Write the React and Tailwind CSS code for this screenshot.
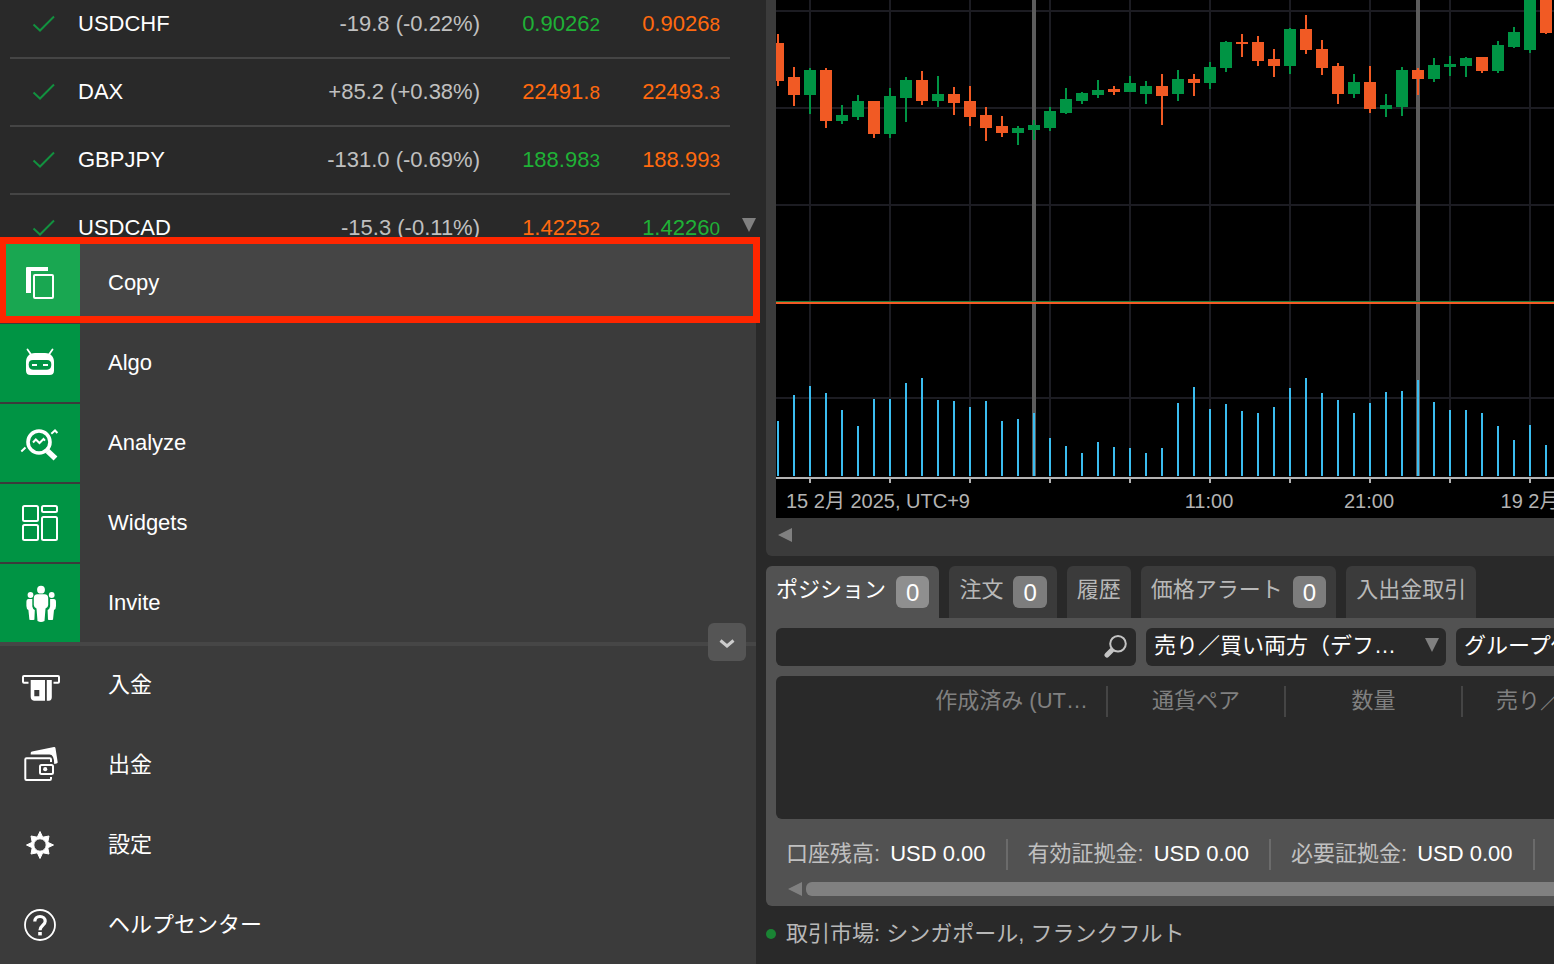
import React, { useState } from 'react';
import clsx from 'clsx';

// --- Data ---

const quotes = [
  { symbol: 'USDCHF', change: '-19.8 (-0.22%)', bid: '0.90262', bidUp: true, ask: '0.90268', askUp: false },
  { symbol: 'DAX', change: '+85.2 (+0.38%)', bid: '22491.8', bidUp: false, ask: '22493.3', askUp: false },
  { symbol: 'GBPJPY', change: '-131.0 (-0.69%)', bid: '188.983', bidUp: true, ask: '188.993', askUp: false },
  { symbol: 'USDCAD', change: '-15.3 (-0.11%)', bid: '1.42252', bidUp: false, ask: '1.42260', askUp: true },
];

// direction, high, body top, body bottom, low
const candles = [
  ['d', 34, 43, 81, 86], ['d', 67, 77, 95, 106], ['u', 68, 70, 95, 114], ['d', 68, 70, 121, 128],
  ['u', 105, 115, 121, 124], ['u', 95, 101, 117, 120], ['d', 101, 101, 134, 138], ['u', 88, 96, 134, 138],
  ['u', 77, 80, 98, 122], ['d', 71, 80, 101, 105], ['u', 76, 94, 101, 107], ['d', 87, 94, 103, 115],
  ['d', 86, 101, 117, 126], ['d', 107, 115, 128, 141], ['d', 116, 126, 133, 137], ['u', 126, 128, 133, 145],
  ['u', 120, 125, 130, 140], ['u', 107, 111, 128, 131], ['u', 88, 99, 113, 114], ['u', 92, 93, 101, 104],
  ['u', 80, 90, 95, 98], ['d', 86, 89, 92, 95], ['u', 76, 83, 92, 92], ['u', 81, 86, 94, 104],
  ['d', 74, 86, 96, 125], ['u', 70, 79, 94, 101], ['d', 74, 79, 83, 96], ['u', 62, 67, 83, 89],
  ['u', 41, 42, 68, 72], ['d', 34, 42, 44, 57], ['d', 36, 42, 61, 66], ['d', 49, 59, 66, 77],
  ['u', 28, 29, 66, 74], ['d', 15, 29, 50, 54], ['d', 40, 49, 68, 75], ['d', 63, 66, 94, 104],
  ['u', 74, 82, 94, 98], ['d', 66, 82, 109, 113], ['u', 94, 105, 109, 117], ['u', 67, 70, 107, 116],
  ['d', 68, 70, 79, 95], ['u', 58, 65, 79, 82], ['u', 56, 64, 67, 76], ['u', 57, 58, 66, 77],
  ['d', 57, 57, 71, 73], ['u', 41, 45, 71, 73], ['u', 27, 32, 47, 48], ['u', 0, 0, 50, 53],
  ['d', 0, 0, 33, 34],
];

const volumeTops = [
  421, 395, 386, 393, 410, 426, 399, 399, 383, 378, 400, 401, 407, 401, 421, 419, 413,
  438, 446, 453, 442, 447, 448, 453, 448, 403, 387, 409, 404, 411, 413, 407, 388, 378,
  393, 400, 413, 403, 392, 391, 380, 402, 410, 410, 413, 426, 440, 425, 445,
];

const gridX = [34, 114, 194, 274, 354, 434, 514, 594, 674, 754];
const gridY = [11, 108, 205, 302, 398];
const sessionX = [258, 642];

const tabs = [
  { id: 'positions', label: 'ポジション', count: 0 },
  { id: 'orders', label: '注文', count: 0 },
  { id: 'history', label: '履歴' },
  { id: 'alerts', label: '価格アラート', count: 0 },
  { id: 'transactions', label: '入出金取引' },
];

const balances = ['口座残高:', '有効証拠金:', '必要証拠金:'];

// --- Icons ---

const Icon = ({ children }) => (
  <svg className="w-10 h-10 overflow-visible" viewBox="0 0 40 40" fill="none" stroke="none" aria-hidden="true">
    {children}
  </svg>
);

const CopyIcon = () => (
  <Icon>
    <path d="M7 4h21v4H11v22H6V5q0-1 1-1z" fill="#fff" />
    <rect x="14" y="12" width="19" height="23" rx="1" stroke="#fff" strokeWidth="2" />
  </Icon>
);

const AlgoIcon = () => (
  <Icon>
    <path d="M7.5 6.5l3.5 5M32.5 6.5l-3.5 5" stroke="#fff" strokeWidth="1.8" strokeLinecap="round" />
    <path
      d="M15 10h10c6 0 9 4 9 9v8.500c0 3-1.500 4.500-4.500 4.500h-19C7.500 32 6 30.500 6 27.500V19c0-5 3-9 9-9z"
      fill="#fff"
    />
    <path d="M13 17h14c3 0 4.300 1.500 4.300 4.500S30 26.700 27 26.700H13c-3 0-4.300-2-4.300-5.200S10 17 13 17z" fill="#009444" />
    <path d="M12 22h5M23 22h5" stroke="#fff" strokeWidth="2" />
  </Icon>
);

const AnalyzeIcon = () => (
  <Icon>
    <g stroke="#fff">
      <circle cx="19" cy="19" r="11" strokeWidth="3.600" />
      <path d="M27.500 28l8 7.500" strokeWidth="5.500" />
      <path d="M13 19.500l2.800-3 3.700 3.500 4-4 1.500 1.700M1.300 28.500l4.200-4M31.300 10.700L35 7.500l2.400 2.500" strokeWidth="2" />
    </g>
  </Icon>
);

const WidgetsIcon = () => (
  <Icon>
    <g stroke="#fff" strokeWidth="2">
      <rect x="3" y="3" width="15" height="15" rx="1.500" />
      <rect x="22" y="3" width="15" height="6" rx="1.500" />
      <rect x="22" y="14" width="15" height="23" rx="1.500" />
      <rect x="3" y="22" width="15" height="15" rx="1.500" />
    </g>
  </Icon>
);

const InviteIcon = () => (
  <Icon>
    <g fill="#fff">
      <circle cx="21" cy="6.700" r="3.900" />
      <circle cx="10.500" cy="12" r="2.900" />
      <circle cx="31.700" cy="12" r="2.900" />
      <path d="M17.500 11.200h7q3.700 0 3.700 4v6.800q0 2-2.700 3.500l-1 12.500q-3.500 2.200-7 0l-1-12.500q-2.700-1.500-2.700-3.500v-6.800q0-4 3.700-4z" />
      <path d="M8.500 16h3.800v7.500q.4 2.500 2.500 3.500l-.4 9.700q-2.500.6-5 0l-1-9.700q-2-1-2-4v-4q0-3 2.100-3z" />
      <path d="M33.900 16h-3.800v7.500q-.4 2.500-2.500 3.500l.4 9.700q2.500.6 5 0l1-9.700q2-1 2-4v-4q0-3-2.100-3z" />
    </g>
  </Icon>
);

const DepositIcon = () => (
  <Icon>
    <path d="M8.500 17.700H4q-1 0-1-1V12q0-1 1-1h34q1 0 1 1v4.700q0 1-1 1h-4.500" stroke="#fff" strokeWidth="2" />
    <path d="M10.700 15H25v20.700H14q-3.300-.5-3.300-4zM14.300 25v6.300h5V25z" fill="#fff" fillRule="evenodd" />
    <path d="M26.800 15h5v17q0 3.500-3 3.700h-2z" fill="#fff" />
  </Icon>
);

const WithdrawIcon = () => (
  <Icon>
    <path d="M31 17v-2.500q0-1.200-1.200-1.200H6.500q-1.200 0-1.200 1.200v19.300q0 1.200 1.200 1.200h23.300q1.200 0 1.200-1.200V32" stroke="#fff" strokeWidth="2" />
    <rect x="20" y="20" width="13" height="9" rx="1.500" stroke="#fff" strokeWidth="2" />
    <circle cx="25.200" cy="24.200" r="2.100" fill="#fff" />
    <path d="M12 6.500L34 2q1.300-.2 1.500 1.200l2.200 14q0 1-1.200 1.300l-2.300.5q0-9.500-4.700-9.500H10.700V8q0-1.200 1.300-1.500z" fill="#fff" />
  </Icon>
);

const SettingsIcon = () => (
  <Icon>
    <path
      d="M20 6.500l2.700 5.700 6.300-1.200-1.200 6.300L33.500 20l-5.700 2.700 1.200 6.300-6.300-1.200L20 33.500l-2.700-5.700-6.300 1.200 1.200-6.300L6.500 20l5.700-2.700-1.200-6.300 6.300 1.200zM20 13.800a6.200 6.200 0 1 0 0 12.400 6.200 6.200 0 0 0 0-12.400z"
      fill="#fff"
      fillRule="evenodd"
      stroke="#fff"
      strokeWidth="1"
      strokeLinejoin="round"
    />
  </Icon>
);

const HelpIcon = () => (
  <Icon>
    <circle cx="20" cy="20" r="15" stroke="#fff" strokeWidth="1.800" />
    <path d="M14.800 16.500c0-3 2-5 5.200-5s5.200 2 5.200 4.800c0 4-5.200 4-5.200 9" stroke="#fff" strokeWidth="3.200" />
    <rect x="18.200" y="27" width="3.600" height="3.400" fill="#fff" />
  </Icon>
);

const CheckIcon = () => (
  <svg className="w-6 h-5" viewBox="0 0 24 20" fill="none" aria-hidden="true">
    <path d="M1.500 10.500l6.500 6L22 2.500" stroke="#12913f" strokeWidth="2" />
  </svg>
);

const DownArrow = () => (
  <svg className="w-[14px] h-[14px]" viewBox="0 0 14 14" aria-hidden="true">
    <path d="M0 0h14L7 14z" fill="#808080" />
  </svg>
);

const LeftArrow = () => (
  <svg className="w-[14px] h-[14px]" viewBox="0 0 14 14" aria-hidden="true">
    <path d="M14 0v14L0 7z" fill="#808080" />
  </svg>
);

const apps = [
  { id: 'copy', label: 'Copy', icon: CopyIcon },
  { id: 'algo', label: 'Algo', icon: AlgoIcon },
  { id: 'analyze', label: 'Analyze', icon: AnalyzeIcon },
  { id: 'widgets', label: 'Widgets', icon: WidgetsIcon },
  { id: 'invite', label: 'Invite', icon: InviteIcon },
];

const links = [
  { id: 'deposit', label: '入金', icon: DepositIcon },
  { id: 'withdraw', label: '出金', icon: WithdrawIcon },
  { id: 'settings', label: '設定', icon: SettingsIcon },
  { id: 'help', label: 'ヘルプセンター', icon: HelpIcon },
];

// --- Left column ---

const Price = ({ value, up }) => (
  <td className={clsx('border-b-2 border-[#454545] pr-[10px] text-right', up ? 'text-[#1fb136]' : 'text-[#ff690f]')}>
    {value.slice(0, -1)}
    <span className="text-[19px]">{value.slice(-1)}</span>
  </td>
);

const Watchlist = () => (
  <div className="flex h-[244px] overflow-hidden">
    <div className="flex-1 pl-[10px]">
      <table className="-mt-[9px] w-full table-fixed border-separate border-spacing-0">
        <colgroup>
          <col className="w-[68px]" />
          <col />
          <col className="w-[200px]" />
          <col className="w-[120px]" />
          <col className="w-[120px]" />
        </colgroup>
        <tbody>
          {quotes.map((q) => (
            <tr key={q.symbol} className="h-[68px]">
              <td className="border-b-2 border-[#454545] pl-[22px]"><CheckIcon /></td>
              <td className="border-b-2 border-[#454545] text-white">{q.symbol}</td>
              <td className="border-b-2 border-[#454545] pr-[10px] text-right text-[#c0c0c0]">{q.change}</td>
              <Price value={q.bid} up={q.bidUp} />
              <Price value={q.ask} up={q.askUp} />
            </tr>
          ))}
        </tbody>
      </table>
    </div>
    <div className="flex w-[26px] items-end pb-3 pl-3">
      <DownArrow />
    </div>
  </div>
);

const AppMenu = ({ selected, onSelect }) => (
  <nav className="flex flex-col gap-[2px]">
    {apps.map(({ id, label, icon: AppIcon }) => (
      <button
        key={id}
        onClick={() => onSelect(id)}
        className={clsx('relative flex h-[78px] items-center text-left text-white', selected === id && 'bg-[#454545]')}
      >
        <span className={clsx('flex h-full w-20 items-center justify-center', selected === id ? 'bg-[#19a751]' : 'bg-[#009444]')}>
          <AppIcon />
        </span>
        <span className="pl-7">{label}</span>
        {selected === id && (
          <span className="absolute -top-[7px] -right-1 -bottom-[1px] -left-[1px] z-10 border-[7px] border-[#ff2600]" />
        )}
      </button>
    ))}
  </nav>
);

const LinkMenu = () => (
  <nav className="relative flex flex-1 flex-col gap-[2px] border-t-4 border-[#464646]">
    {links.map(({ id, label, icon: LinkIcon }) => (
      <a key={id} href={`#${id}`} className="flex h-[78px] shrink-0 items-center text-white">
        <span className="flex w-20 justify-center"><LinkIcon /></span>
        <span className="pl-7">{label}</span>
      </a>
    ))}
    <button
      aria-label="Collapse"
      className="absolute -top-[23px] right-[10px] flex h-[38px] w-[38px] items-center justify-center rounded-md bg-[#555555]"
    >
      <svg className="w-4 h-4" viewBox="0 0 16 16" fill="none" aria-hidden="true">
        <path d="M1.500 6.500L8 12l6.500-5.500" stroke="#ccc" strokeWidth="3" />
      </svg>
    </button>
  </nav>
);

// --- Right column ---

const Chart = () => (
  <svg className="block h-[518px] w-full bg-black" role="img" aria-label="Price chart">
    <g fill="#1c1c22">
      {gridX.map((x) => <rect key={x} x={x - 1} y="0" width="2" height="477" />)}
      {gridY.map((y) => <rect key={y} x="0" y={y - 1} width="100%" height="2" />)}
    </g>
    {sessionX.map((x) => <rect key={x} x={x - 2} y="0" width="4" height="476" fill="#5c5c5c" />)}
    {candles.map(([dir, high, top, bottom, low], i) => (
      <g key={i} fill={dir === 'u' ? '#009444' : '#f15a24'}>
        <rect x={i * 16 + 1} y={high} width="2" height={low - high} />
        <rect x={i * 16 - 4} y={top} width="12" height={bottom - top} />
      </g>
    ))}
    <rect x="0" y="301" width="100%" height="1" fill="#1a7a3c" />
    <rect x="0" y="302" width="100%" height="2" fill="#f15a24" />
    {volumeTops.map((top, i) => (
      <rect key={i} x={i * 16 + 1} y={top} width="2" height={476 - top} fill="#3bbdf0" />
    ))}
    <g fill="#b3b3b3">
      <rect x="0" y="477" width="100%" height="2" />
      {gridX.map((x) => <rect key={x} x={x - 1} y="479" width="2" height="4" />)}
    </g>
    <g fill="#b3b3b3" fontSize="20">
      <text x="10" y="508">15 2月 2025, UTC+9</text>
      <text x="433" y="508" textAnchor="middle">11:00</text>
      <text x="593" y="508" textAnchor="middle">21:00</text>
      <text x="754" y="508" textAnchor="middle">19 2月</text>
    </g>
  </svg>
);

const Tabs = ({ active, onChange }) => (
  <div role="tablist" className="flex gap-[10px]">
    {tabs.map((tab) => (
      <button
        key={tab.id}
        role="tab"
        aria-selected={active === tab.id}
        onClick={() => onChange(tab.id)}
        className={clsx(
          'flex h-[52px] shrink-0 items-start gap-[10px] rounded-t-md px-[10px] pt-[10px] whitespace-nowrap',
          active === tab.id ? 'bg-[#525252] text-white' : 'bg-[#3b3b3b] text-[#b8b8b8]'
        )}
      >
        <span className="leading-7">{tab.label}</span>
        {tab.count !== undefined && (
          <span
            className={clsx(
              'h-8 rounded-md px-[10px] text-2xl leading-[34px] text-white',
              active === tab.id ? 'bg-[#8f8f8f]' : 'bg-[#7d7d7d]'
            )}
          >
            {tab.count}
          </span>
        )}
      </button>
    ))}
  </div>
);

const Dropdown = ({ label, value }) => (
  <div className="relative w-[300px] shrink-0">
    <select
      aria-label={label}
      className="h-[38px] w-full appearance-none rounded-md bg-[#292929] pr-10 pb-[2px] pl-2 text-white"
    >
      <option>{value}</option>
    </select>
    <span className="pointer-events-none absolute top-[10px] right-[7px]"><DownArrow /></span>
  </div>
);

const Filters = () => (
  <div className="flex gap-[10px]">
    <div className="relative w-[360px] shrink-0">
      <input
        type="text"
        aria-label="検索"
        className="h-[38px] w-full rounded-md bg-[#292929] pr-10 pl-2 text-white outline-none"
      />
      <svg className="absolute top-[6px] right-[9px] h-6 w-6" viewBox="0 0 24 24" fill="none" aria-hidden="true">
        <circle cx="15" cy="9.700" r="7.800" stroke="#c4c4c4" strokeWidth="2" />
        <path d="M8.500 16.500L4 21" stroke="#c4c4c4" strokeWidth="5" strokeLinecap="round" />
      </svg>
    </div>
    <Dropdown label="売買区分" value="売り／買い両方（デフ…" />
    <Dropdown label="グループ" value="グループ化なし" />
  </div>
);

const HeadCell = ({ children, className }) => (
  <th scope="col" className="p-0 font-normal">
    <div className={clsx('h-[31px] border-r-2 border-[#454545] leading-[30px] whitespace-nowrap', className)}>{children}</div>
  </th>
);

const PositionsTable = () => (
  <div className="mt-[10px] h-[143px] overflow-hidden rounded-l-md bg-[#292929] pt-[10px]">
    <table className="w-[865px] table-fixed text-[#808080]">
      <colgroup>
        <col className="w-[332px]" />
        <col className="w-[178px]" />
        <col className="w-[177px]" />
        <col className="w-[178px]" />
      </colgroup>
      <thead>
        <tr>
          <HeadCell className="pr-[18px] text-right">作成済み (UT…</HeadCell>
          <HeadCell>通貨ペア</HeadCell>
          <HeadCell>数量</HeadCell>
          <HeadCell>売り／買い</HeadCell>
        </tr>
      </thead>
    </table>
  </div>
);

const Summary = () => (
  <dl className="mt-5 flex">
    {balances.map((label) => (
      <div key={label} className="flex h-[31px] shrink-0 gap-[10px] border-r-2 border-[#6b6b6b] pr-5 pl-5 leading-[30px] first:pl-[10px]">
        <dt className="text-[#c0c0c0]">{label}</dt>
        <dd className="text-white">USD 0.00</dd>
      </div>
    ))}
  </dl>
);

// --- Main App ---

export default function App() {
  const [selectedApp, setSelectedApp] = useState('copy');
  const [activeTab, setActiveTab] = useState('positions');

  return (
    <div className="flex h-screen gap-[10px] overflow-hidden bg-[#292929] font-['Liberation_Sans','Noto_Sans_CJK_JP',sans-serif] text-[22px] leading-7">
      <aside className="flex w-[756px] shrink-0 flex-col">
        <Watchlist />
        <div className="flex flex-1 flex-col bg-[#3b3b3b]">
          <AppMenu selected={selectedApp} onSelect={setSelectedApp} />
          <LinkMenu />
        </div>
      </aside>

      <main className="flex min-w-0 flex-1 flex-col overflow-hidden">
        <section className="rounded-bl-md bg-[#3b3b3b] pl-[10px]">
          <Chart />
          <div className="flex h-[38px] items-center pb-1 pl-[2px]">
            <LeftArrow />
          </div>
        </section>

        <section className="mt-[10px]">
          <Tabs active={activeTab} onChange={setActiveTab} />
          <div className="rounded-bl-md bg-[#525252] pt-[10px] pb-[10px] pl-[10px]">
            <Filters />
            <PositionsTable />
            <Summary />
            <div className="mt-3 flex items-center gap-1 pl-3">
              <LeftArrow />
              <div className="h-[14px] flex-1 rounded-l-md bg-[#808080]" />
            </div>
          </div>
        </section>

        <footer className="flex items-center gap-[10px] pt-[14px] text-[#b8b8b8]">
          <span className="h-[10px] w-[10px] rounded-full bg-[#1a8434]" />
          取引市場: シンガポール, フランクフルト
        </footer>
      </main>
    </div>
  );
}
